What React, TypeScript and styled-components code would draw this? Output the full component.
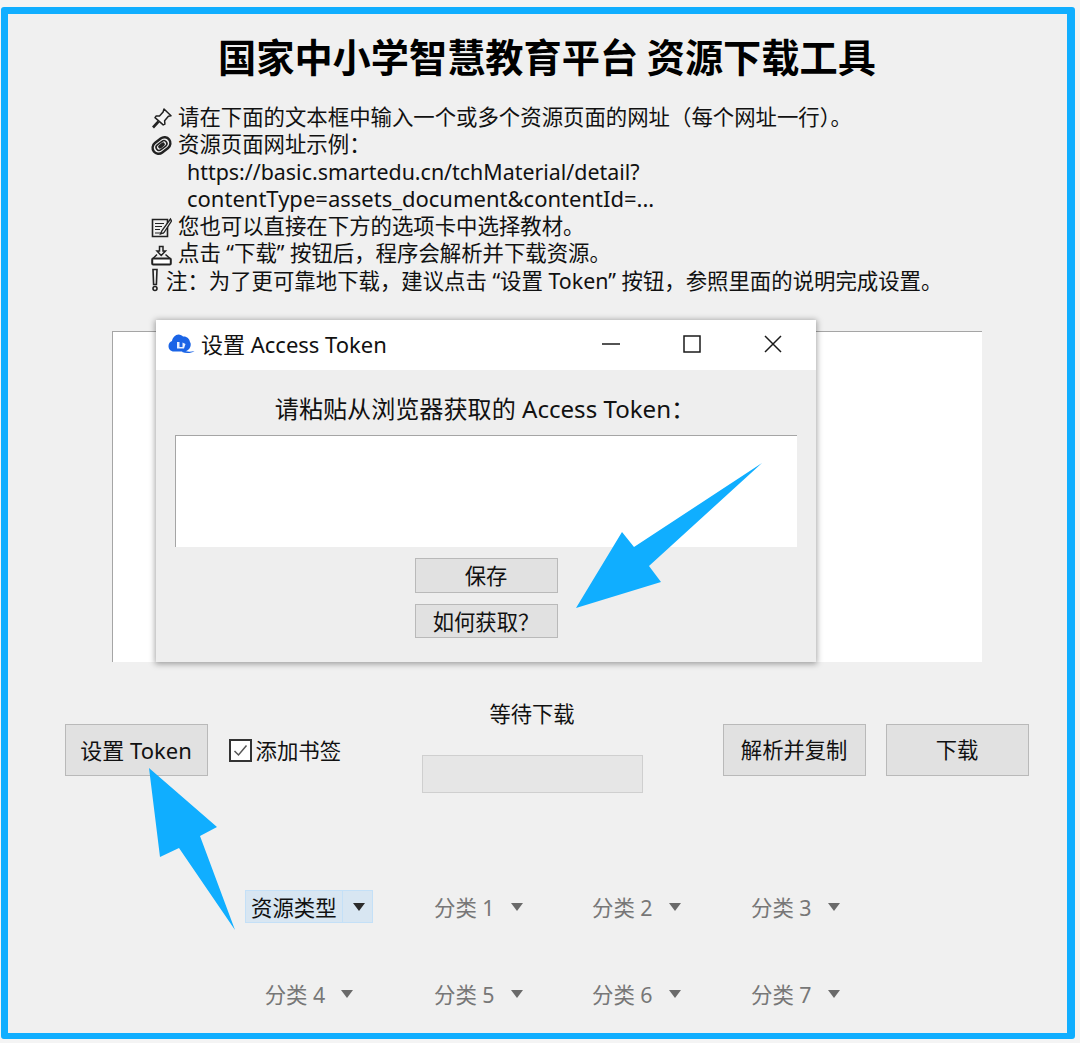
import styled, { createGlobalStyle } from "styled-components";

const GlobalStyle = createGlobalStyle`
  html, body {
    margin: 0;
    padding: 0;
    background: #f4f4f4;
  }
  body {
    font-family: "Noto Sans", "Noto Sans CJK SC", sans-serif;
    color: #111;
  }
`;

const Page = styled.div`
  position: relative;
  width: 1080px;
  height: 1043px;
  overflow: hidden;
  padding: 7px 5px 4px 1px;
  box-sizing: border-box;
`;

const Frame = styled.div`
  height: 100%;
  box-sizing: border-box;
  border: solid #10aeff;
  border-width: 7px 8px 6px 7px;
  border-radius: 3px;
  background: #f0f0f0;
  display: flex;
  flex-direction: column;
`;

const Title = styled.h1`
  margin: 19px 0 0 210px;
  font-family: "Noto Sans CJK SC", sans-serif;
  font-size: 38.2px;
  line-height: 46px;
  font-weight: 700;
  color: #000;
  white-space: nowrap;
`;

const Notes = styled.ul`
  list-style: none;
  margin: 24px 0 0 143px;
  padding: 0;
  font-size: 21.4px;
  line-height: 27.3px;
`;

const Note = styled.li<{ $gap?: number }>`
  display: flex;
  align-items: center;
  white-space: nowrap;
  height: 27.3px;
  gap: ${(p) => p.$gap ?? 6}px;
`;

const NoteUrl = styled.li<{ $size: number }>`
  padding-left: 36px;
  white-space: nowrap;
  height: 27.3px;
  font-size: ${(p) => p.$size}px;
`;

const NoteIcon = styled.svg`
  flex: none;
  width: 21px;
  height: 21px;
  margin-top: 4px;
`;

const TextBox = styled.div`
  position: relative;
  margin: 37px 0 0 104px;
  width: 870px;
  height: 331px;
  box-sizing: border-box;
  background: #fff;
  border-top: 1px solid #a5a5a5;
  border-left: 1px solid #a5a5a5;
`;

const Dialog = styled.div`
  position: absolute;
  left: 43px;
  top: -12px;
  width: 660px;
  height: 342px;
  background: #eee;
  box-shadow: 0 1px 6px 1px rgba(0, 0, 0, 0.35);
  display: flex;
  flex-direction: column;
`;

const TitleBar = styled.div`
  flex: none;
  height: 50px;
  background: #fff;
  display: flex;
  align-items: center;
  padding: 0 3px 2px 12px;
  box-sizing: border-box;
`;

const TitleText = styled.span`
  margin: -3px 0 0 6px;
  font-size: 22px;
  flex: 1;
  white-space: nowrap;
`;

const WinButton = styled.button`
  width: 81px;
  height: 48px;
  padding: 0;
  border: 0;
  background: none;
  display: flex;
  align-items: center;
  justify-content: center;
`;

const DialogBody = styled.div`
  flex: 1;
  display: flex;
  flex-direction: column;
  align-items: center;
`;

const DialogLabel = styled.div`
  margin-top: 23px;
  margin-left: -2px;
  font-size: 24.1px;
  line-height: 32px;
  white-space: nowrap;
`;

const TokenInput = styled.div`
  margin-top: 10px;
  width: 622px;
  height: 112px;
  box-sizing: border-box;
  background: #fff;
  border-top: 1px solid #a5a5a5;
  border-left: 1px solid #a5a5a5;
`;

const DialogButtons = styled.div`
  display: flex;
  flex-direction: column;
  gap: 11px;
  margin-top: 11px;
`;

const Button = styled.button<{ $h?: number; $size?: number }>`
  width: 143px;
  height: ${(p) => p.$h ?? 52}px;
  padding: 0 0 3px;
  box-sizing: border-box;
  border: 1px solid #b9b9b9;
  background: #e1e1e1;
  font-family: inherit;
  font-size: ${(p) => p.$size ?? 21.3}px;
  color: #111;
  white-space: nowrap;
`;

const Controls = styled.div`
  display: flex;
  align-items: flex-start;
  margin: 62px 0 0 56.5px;
`;

const CheckLabel = styled.label`
  display: flex;
  align-items: center;
  gap: 4px;
  margin: 10px 0 0 21px;
  height: 30px;
  font-size: 21.4px;
  white-space: nowrap;
`;

const CheckBox = styled.span`
  width: 23px;
  height: 23px;
  margin-top: 2px;
  box-sizing: border-box;
  border: 2px solid #333;
  background: #fff;
  display: flex;
  align-items: center;
  justify-content: center;
`;

const Progress = styled.div`
  display: flex;
  flex-direction: column;
  align-items: center;
  margin: -26px 0 0 80.5px;
  width: 221px;
`;

const ProgressLabel = styled.div`
  font-size: 21.3px;
  line-height: 32px;
`;

const ProgressBar = styled.div`
  margin-top: 25px;
  width: 221px;
  height: 38px;
  box-sizing: border-box;
  border: 1px solid #cfcfcf;
  background: #e6e6e6;
`;

const RightButtons = styled.div`
  display: flex;
  gap: 20px;
  margin-left: 80px;
`;

const Menus = styled.div`
  display: grid;
  grid-template-columns: 189px 158px 159px 89px;
  grid-auto-rows: 33px;
  row-gap: 54px;
  margin: 97px 0 0 237px;
`;

const FirstCell = styled.div`
  width: 128px;
  display: flex;
  justify-content: center;
`;

const Menu = styled.div<{ $active?: boolean }>`
  display: flex;
  align-items: center;
  height: 33px;
  box-sizing: border-box;
  font-size: 21.4px;
  white-space: nowrap;
  color: ${(p) => (p.$active ? "#111" : "#777")};
  ${(p) =>
    p.$active &&
    `
    width: 129px;
    border: 1px solid #c4e0f7;
    background: #d8e6f2;
  `}
`;

const MenuLabel = styled.span<{ $active?: boolean }>`
  ${(p) =>
    p.$active
      ? `
    padding: 0 5px;
    height: 100%;
    display: flex;
    align-items: center;
    border-right: 1px solid #c4e0f7;
  `
      : ""}
`;

const Caret = styled.span<{ $active?: boolean }>`
  width: 0;
  height: 0;
  margin-left: ${(p) => (p.$active ? 10 : 16)}px;
  border-left: 6px solid transparent;
  border-right: 6px solid transparent;
  border-top: 8px solid ${(p) => (p.$active ? "#2b2b2b" : "#6a6a6a")};
`;

const Arrows = styled.svg`
  position: absolute;
  left: 0;
  top: 0;
  width: 1080px;
  height: 1043px;
  pointer-events: none;
`;

const PinIcon = () => (
  <NoteIcon viewBox="0 0 21 21" fill="none" stroke="#222" strokeWidth="1.5" strokeLinejoin="round">
    <path d="M13 1l7 6.800-2.600.5-3.800 4.400.3 3.300-1.700.9L4 9.600l1.200-1.700 3.300.1 3.600-4z" fill="#f6f6f6" />
    <path d="M7.500 13.500l-5.500 6" strokeWidth="2.600" />
  </NoteIcon>
);

const ClipIcon = () => (
  <NoteIcon viewBox="0 0 21 21" fill="none" stroke="#222" strokeWidth="1.600">
    <g transform="rotate(-38 10.500 10.500)">
      <rect x="0.800" y="4.500" width="19.400" height="12" rx="6" strokeWidth="2.400" />
      <rect x="4.500" y="7.500" width="12" height="6" rx="3" />
      <rect x="7.500" y="9.500" width="6" height="2" rx="1" fill="#222" />
    </g>
  </NoteIcon>
);

const MemoIcon = () => (
  <NoteIcon viewBox="0 0 21 21" fill="none" stroke="#222" strokeWidth="1.300">
    <path d="M1.500 2.500h15v17h-15z" strokeWidth="1.600" />
    <path d="M4 6.500h9M4 9.500h7M4 12.500h5M4 16h9" strokeWidth="1" />
    <path d="M19.500 2L11 13.500l-1.500 3.500 3.500-1.500L20.500 4z" fill="#f0f0f0" />
  </NoteIcon>
);

const TrayIcon = () => (
  <NoteIcon viewBox="0 0 21 21" fill="none" stroke="#222" strokeWidth="1.500">
    <path d="M8.500 1.500h3.500v4.500h2.500L10.200 10.500 6 6h2.500z" fill="#f0f0f0" />
    <path d="M6 9.500L1.500 14M14.500 9.500L19.500 14" />
    <rect x="1.200" y="13.500" width="18.600" height="6" rx="1" strokeWidth="2" fill="#fff" />
  </NoteIcon>
);

const BangIcon = styled.svg`
  flex: none;
  width: 8px;
  height: 24px;
`;

const CloudIcon = () => (
  <svg width="27" height="20" viewBox="0 0 27 20">
    <path
      d="M6 17.500C2.500 17.500.5 15 .5 12c0-2.500 1.500-4.500 3.500-5C4.500 3.500 7.500.5 10.500.5c2 0 3.500 1 4.500 2 3.500-.5 6.500 2 7 5.500 1.200 1.500 1 4.500-.5 6.500-1.500 2-3.500 3-6 3z"
      fill="#1a64e6"
    />
    <path d="M9 8h2.500v5h3V8.500l3 1.500-1.500 4.500H9z" fill="#e8f0ff" />
    <path d="M15 16c3.500 2 7.500 2 11.500 1-3.500 2.500-8.500 2.500-12.500 1z" fill="#1a64e6" />
  </svg>
);

const menusTop = ["分类 1", "分类 2", "分类 3"];
const menusBottom = ["分类 5", "分类 6", "分类 7"];

export default function App() {
  return (
    <Page>
      <GlobalStyle />
      <Frame>
        <Title>国家中小学智慧教育平台 资源下载工具</Title>
        <Notes>
          <Note>
            <PinIcon />
            请在下面的文本框中输入一个或多个资源页面的网址（每个网址一行）。
          </Note>
          <Note>
            <ClipIcon />
            资源页面网址示例：
          </Note>
          <NoteUrl $size={21.4}>https://basic.smartedu.cn/tchMaterial/detail?</NoteUrl>
          <NoteUrl $size={22}>contentType=assets_document&amp;contentId=...</NoteUrl>
          <Note>
            <MemoIcon />
            您也可以直接在下方的选项卡中选择教材。
          </Note>
          <Note>
            <TrayIcon />
            点击 “下载” 按钮后，程序会解析并下载资源。
          </Note>
          <Note $gap={7}>
            <BangIcon viewBox="0 0 8 24" fill="none" stroke="#222">
              <path d="M2 1.500h4l-.6 15H2.600z" strokeWidth="1.600" />
              <circle cx="4" cy="20.500" r="2" strokeWidth="1.600" />
            </BangIcon>
            注：为了更可靠地下载，建议点击 “设置 Token” 按钮，参照里面的说明完成设置。
          </Note>
        </Notes>

        <TextBox>
          <Dialog>
            <TitleBar>
              <CloudIcon />
              <TitleText>设置 Access Token</TitleText>
              <WinButton>
                <svg width="18" height="2" viewBox="0 0 18 2">
                  <path d="M0 1h18" stroke="#1a1a1a" strokeWidth="1.500" />
                </svg>
              </WinButton>
              <WinButton>
                <svg width="18" height="18" viewBox="0 0 18 18">
                  <rect x="1" y="1" width="16" height="16" fill="none" stroke="#1a1a1a" strokeWidth="1.500" />
                </svg>
              </WinButton>
              <WinButton>
                <svg width="18" height="18" viewBox="0 0 18 18">
                  <path d="M1 1l16 16M17 1L1 17" stroke="#1a1a1a" strokeWidth="1.500" />
                </svg>
              </WinButton>
            </TitleBar>
            <DialogBody>
              <DialogLabel>请粘贴从浏览器获取的 Access Token：</DialogLabel>
              <TokenInput />
              <DialogButtons>
                <Button $h={35}>保存</Button>
                <Button $h={34}>如何获取？</Button>
              </DialogButtons>
            </DialogBody>
          </Dialog>
        </TextBox>

        <Controls>
          <Button $size={22}>设置 Token</Button>
          <CheckLabel>
            <CheckBox>
              <svg width="15" height="13" viewBox="0 0 15 13">
                <path d="M1.500 7l4 4 8-9.500" fill="none" stroke="#555" strokeWidth="1.500" />
              </svg>
            </CheckBox>
            添加书签
          </CheckLabel>
          <Progress>
            <ProgressLabel>等待下载</ProgressLabel>
            <ProgressBar />
          </Progress>
          <RightButtons>
            <Button>解析并复制</Button>
            <Button>下载</Button>
          </RightButtons>
        </Controls>

        <Menus>
          <FirstCell>
            <Menu $active>
              <MenuLabel $active>资源类型</MenuLabel>
              <Caret $active />
            </Menu>
          </FirstCell>
          {menusTop.map((name) => (
            <Menu key={name}>
              <MenuLabel>{name}</MenuLabel>
              <Caret />
            </Menu>
          ))}
          <FirstCell>
            <Menu>
              <MenuLabel>分类 4</MenuLabel>
              <Caret />
            </Menu>
          </FirstCell>
          {menusBottom.map((name) => (
            <Menu key={name}>
              <MenuLabel>{name}</MenuLabel>
              <Caret />
            </Menu>
          ))}
        </Menus>
      </Frame>

      <Arrows viewBox="0 0 1080 1043">
        <polygon points="762,463 634,547 622,532 576,608 661,582 649,566" fill="#10aeff" />
        <polygon points="149,768 217,827 200,836 235,930 179,848 160,857" fill="#10aeff" />
      </Arrows>
    </Page>
  );
}
